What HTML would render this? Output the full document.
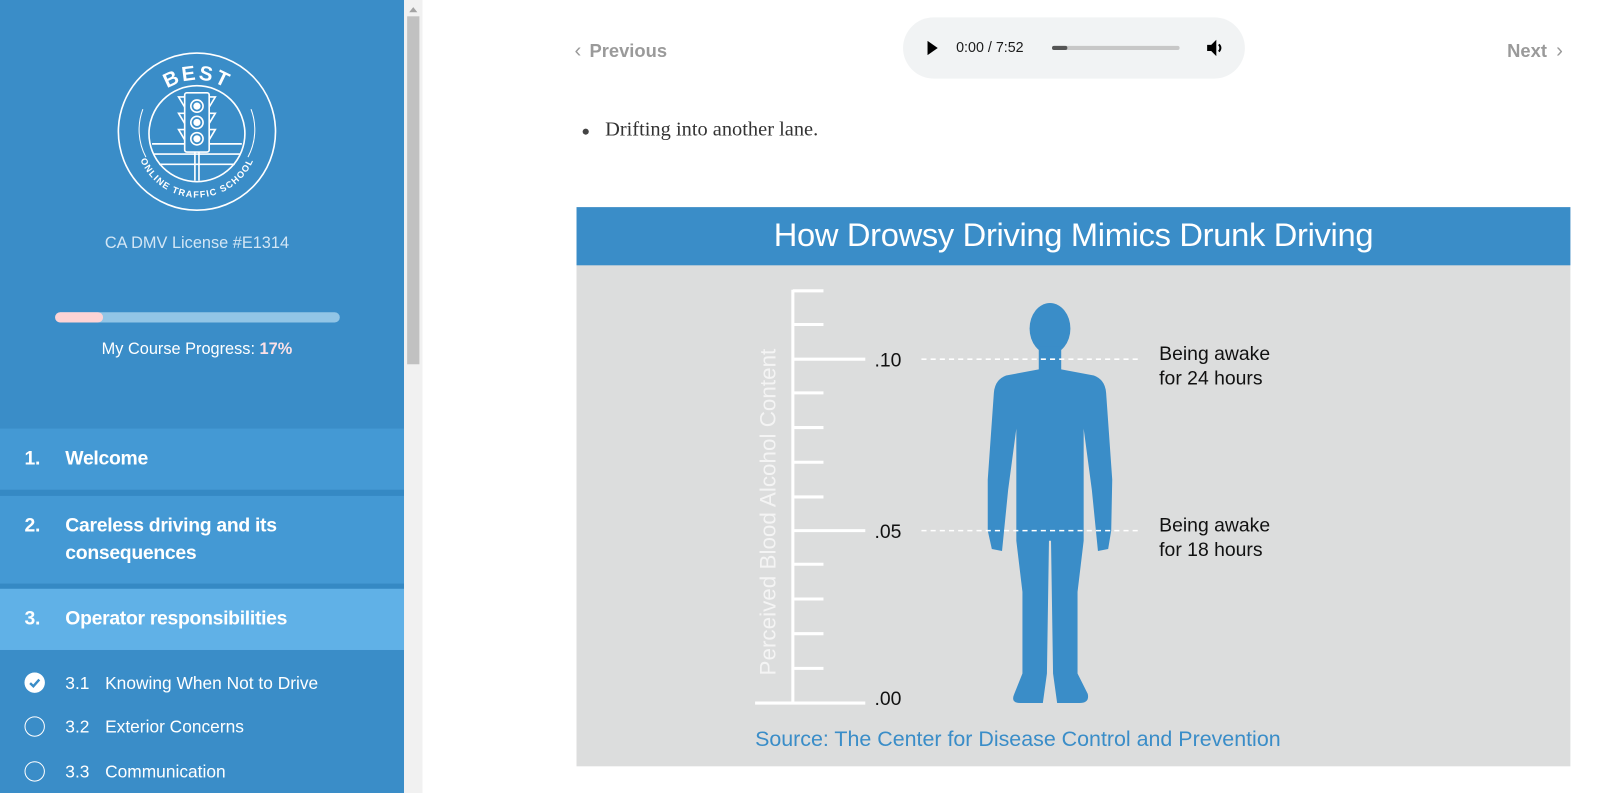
<!DOCTYPE html>
<html><head><meta charset="utf-8"><style>
*{margin:0;padding:0;box-sizing:border-box}
html,body{width:1600px;height:793px;overflow:hidden;background:#fff}
body{font-family:"Liberation Sans",sans-serif;position:relative}
#w{position:absolute;left:0;top:0;width:1568px;height:778px;transform:scale(1.0204);transform-origin:0 0}
.sb{position:absolute;left:0;top:0;width:396px;height:793px;background:#3a8dc8;color:#fff}
.scroll{position:absolute;left:396px;top:0;width:18px;height:793px;background:#f1f1f1}
.thumb{position:absolute;left:399px;top:16px;width:12px;height:341px;background:#c1c1c1}
.abs{position:absolute}
.sec{position:absolute;left:0;width:396px;font-weight:bold;font-size:19px;letter-spacing:-0.3px;line-height:27px}
.sec .n{position:absolute;left:24px;top:0}
.sec .t{position:absolute;left:64px;top:0}
.sub{position:absolute;left:0;font-size:17px}
.sub .c{position:absolute;left:24px;top:-1px;width:20px;height:20px;border:1.5px solid #fff;border-radius:50%}
.sub .n{position:absolute;left:64px}
.sub .t{position:absolute;left:103px;white-space:nowrap}
</style></head><body><div id="w">
<div class="sb">
<svg class="abs" style="left:113px;top:49px" width="160" height="160" viewBox="0 0 160 160">
<g fill="none" stroke="#fff" stroke-width="1.6">
<circle cx="80" cy="80" r="77"/>
<circle cx="80" cy="82" r="47"/>
<path d="M27 58 A57 57 0 0 0 30 105" stroke-width="1"/>
<path d="M133 58 A57 57 0 0 1 130 105" stroke-width="1"/>
<path d="M36 92 H124 M38 102 H122 M43 112 H117"/>
<rect x="68" y="42" width="24" height="58" rx="2" fill="#3a8dc8"/>
<circle cx="80" cy="55" r="6"/><circle cx="80" cy="71" r="6"/><circle cx="80" cy="87" r="6"/>
<path d="M68 46 L62 46 L68 56 M68 62 L62 62 L68 72 M68 78 L62 78 L68 88 M92 46 L98 46 L92 56 M92 62 L98 62 L92 72 M92 78 L98 78 L92 88"/>
<path d="M78 100 V128 M82 100 V128"/>
</g>
<g fill="#fff"><circle cx="80" cy="55" r="3.5"/><circle cx="80" cy="71" r="3.5"/><circle cx="80" cy="87" r="3.5"/></g>
<path id="arcT" d="M40 48 A52 52 0 0 1 120 48" fill="none"/>
<text fill="#fff" font-size="20" font-weight="bold" letter-spacing="2" font-family="Liberation Sans"><textPath href="#arcT" startOffset="50%" text-anchor="middle">BEST</textPath></text>
<path id="arc" d="M22 100 A60 60 0 0 0 138 100" fill="none"/>
<text fill="#fff" font-size="9" font-weight="bold" letter-spacing="1.2" font-family="Liberation Sans"><textPath href="#arc" startOffset="50%" text-anchor="middle">ONLINE TRAFFIC SCHOOL</textPath></text>
</svg>
<div class="abs" style="left:0;width:386px;top:230px;text-align:center;font-size:16px;color:#d3e6f5">CA DMV License #E1314</div>
<div class="abs" style="left:54px;top:306px;width:279px;height:10px;border-radius:5px;background:#92c5e6"></div>
<div class="abs" style="left:54px;top:306px;width:47px;height:10px;border-radius:5px;background:#fdd3d5"></div>
<div class="abs" style="left:0;width:386px;top:334px;text-align:center;font-size:16px">My Course Progress: <b style="color:#fbe0e6">17%</b></div>
<div class="abs" style="left:0;top:420px;width:396px;height:60px;background:#4499d4"></div>
<div class="abs" style="left:0;top:480px;width:396px;height:6px;background:#3589c4"></div>
<div class="abs" style="left:0;top:486px;width:396px;height:86px;background:#4499d4"></div>
<div class="abs" style="left:0;top:572px;width:396px;height:5px;background:#3589c4"></div>
<div class="abs" style="left:0;top:577px;width:396px;height:60px;background:#60b1e7"></div>
<div class="sec" style="top:436px"><span class="n">1.</span><span class="t">Welcome</span></div>
<div class="sec" style="top:502px"><span class="n">2.</span><span class="t">Careless driving and its<br>consequences</span></div>
<div class="sec" style="top:593px"><span class="n">3.</span><span class="t">Operator responsibilities</span></div>
<div class="sub" style="top:660px"><span class="c" style="background:#fff"><svg width="20" height="20" viewBox="0 0 20 20" style="position:absolute;left:-1.5px;top:-1.5px"><path d="M5.5 10.5 L8.7 13.5 L14.5 7" stroke="#3a8dc8" stroke-width="2.4" fill="none"/></svg></span><span class="n">3.1</span><span class="t">Knowing When Not to Drive</span></div>
<div class="sub" style="top:703px"><span class="c"></span><span class="n">3.2</span><span class="t">Exterior Concerns</span></div>
<div class="sub" style="top:747px"><span class="c"></span><span class="n">3.3</span><span class="t">Communication</span></div>
</div>
<div class="scroll"></div><div class="thumb"></div>
<div class="abs" style="top:3px;width:0;height:0;border:4px solid transparent;border-bottom:5px solid #a3a3a3;left:401px"></div>

<div class="abs" style="left:563px;top:39px;font-size:18px;font-weight:bold;color:#9a9a9a"><span style="font-weight:normal;font-size:20px;margin-right:8px">&#x2039;</span>Previous</div>
<div class="abs" style="left:1477px;top:39px;font-size:18px;font-weight:bold;color:#9a9a9a">Next<span style="font-weight:normal;font-size:20px;margin-left:9px">&#x203A;</span></div>
<div class="abs" style="left:885px;top:17px;width:335px;height:60px;border-radius:30px;background:#f1f3f4"></div>
<svg class="abs" style="left:908px;top:40px" width="12" height="14"><path d="M1 0 L11 7 L1 14Z" fill="#000"/></svg>
<div class="abs" style="left:937px;top:38px;font-size:14px;color:#1a1a1a">0:00 / 7:52</div>
<div class="abs" style="left:1031px;top:45px;width:125px;height:4px;border-radius:2px;background:#c7c7c7"></div>
<div class="abs" style="left:1031px;top:45px;width:15px;height:4px;border-radius:2px;background:#555"></div>
<svg class="abs" style="left:1182px;top:38px" width="18" height="18" viewBox="0 0 18 18"><path d="M1 6 H5 L10 1 V17 L5 12 H1Z" fill="#000"/><path d="M12.5 5.5 Q15.5 9 12.5 12.5" stroke="#000" stroke-width="2" fill="none"/></svg>
<div class="abs" style="left:571px;top:126px;width:6px;height:6px;border-radius:50%;background:#444"></div>
<div class="abs" style="left:593px;top:116px;font-family:'Liberation Serif',serif;font-size:20px;color:#333">Drifting into another lane.</div>

<div class="abs" style="left:565px;top:203px;width:974px;height:548px;background:#dcdddd"></div>
<div class="abs" style="left:565px;top:203px;width:974px;height:57px;background:#3a8dc8;color:#fff;font-size:32px;text-align:center;line-height:54px;letter-spacing:-0.3px">How Drowsy Driving Mimics Drunk Driving</div>
<svg class="abs" style="left:0;top:0" width="1600" height="793">
<g stroke="#fff" stroke-width="3">
<line x1="777" y1="284" x2="777" y2="690"/>
<line x1="740" y1="689" x2="848" y2="689"/>
<line x1="777" y1="352" x2="848" y2="352"/>
<line x1="777" y1="520" x2="848" y2="520"/>
<path d="M777 285H807M777 318H807M777 385H807M777 419H807M777 453H807M777 487H807M777 553H807M777 587H807M777 621H807M777 655H807"/>
</g>
<g fill="#3a8dc8">
<ellipse cx="1029" cy="322" rx="20" ry="25"/>
<path d="M1018,340 L1040,340 L1040,362 L1072,368 Q1083,372 1084,385 L1090,470 L1089,520 L1086,538 L1076,540 L1074,520 L1070,480 L1062,420 L1062,530 L1056,580 L1056,660 L1066,680 Q1068,689 1058,689 L1036,689 L1032,660 L1030,530 L1028,530 L1026,660 L1022,689 L1000,689 Q990,689 994,680 L1002,660 L1002,580 L996,530 L996,420 L988,480 L984,520 L982,540 L972,538 L968,520 L968,470 L974,385 Q975,372 986,368 L1018,362 Z"/>
</g>
<g stroke="#fff" stroke-width="1.5" stroke-dasharray="5 4">
<line x1="903" y1="352" x2="1116" y2="352"/>
<line x1="903" y1="520" x2="1116" y2="520"/>
</g>
<g font-family="Liberation Sans" font-size="19" fill="#111">
<text x="857" y="359">.10</text><text x="857" y="527">.05</text><text x="857" y="691">.00</text>
<text x="1136" y="353">Being awake</text><text x="1136" y="377">for 24 hours</text>
<text x="1136" y="521">Being awake</text><text x="1136" y="545">for 18 hours</text>
</g>
<text transform="translate(760,662) rotate(-90)" font-family="Liberation Sans" font-size="22" fill="#f4f4f4">Perceived Blood Alcohol Content</text>
<text x="740" y="731" font-family="Liberation Sans" font-size="21" fill="#3a8dc8">Source: The Center for Disease Control and Prevention</text>
</svg>
</div></body></html>
